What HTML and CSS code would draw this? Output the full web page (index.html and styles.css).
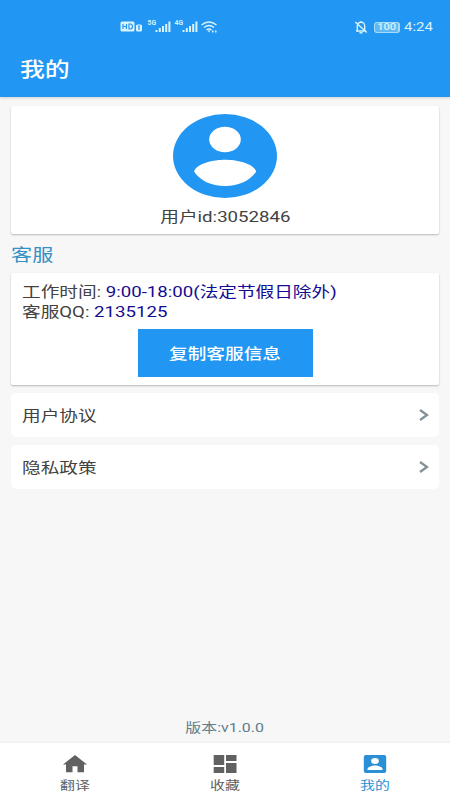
FILE: index.html
```html
<!DOCTYPE html>
<html lang="zh-CN">
<head>
<meta charset="utf-8">
<title>我的</title>
<link rel="stylesheet" href="styles.css">
</head>
<body>
<div class="app">
  <header class="header">
    <div class="status">
      <svg class="signals" width="98" height="16" viewBox="0 0 98 16">
        <rect class="light" x="0.500" y="3.5" width="14" height="10" rx="1.5"/>
        <path class="cut" d="M3 6v5M6.500 6v5M3 8.500H6.500M9 6v5h1.500q2-.2 2-2.500T10.500 6z"/>
        <rect class="light" x="16" y="6.500" width="6" height="7" rx="1.500"/>
        <path class="cut" d="M18 8.500l1-.5v4"/>
        <text x="27.500" y="7" textLength="8.500" lengthAdjust="spacingAndGlyphs">5G</text>
        <path class="light" d="M35.500 12h2v2h-2zM38.800 10h2v4h-2zM42 8h2v6h-2zM45.200 6h2v8h-2zM48.400 3.500h2V14h-2z"/>
        <text x="54.500" y="7" textLength="8.500" lengthAdjust="spacingAndGlyphs">4G</text>
        <path class="light" d="M62.500 12h2v2h-2zM65.800 10h2v4h-2zM69 8h2v6h-2zM72.200 6h2v8h-2zM75.400 3.500h2V14h-2z"/>
        <path class="wave" d="M81.500 7Q89 1 96.500 7M84 9.500q5-4 10 0M86.500 12q2.500-2 5 0"/>
        <path class="light" d="M87.500 12.500h3L89 14.500zM92 12.500h1.500v2H92zM95 12.500h1.500v2H95z"/>
      </svg>
      <div class="status-right">
        <svg width="14" height="14" viewBox="0 0 14 14">
          <path class="wave" d="M2 11h10M3.300 10.500V6Q3.500 2.500 7 2.300T10.700 6v4.500M5.500 12.700h3M1.300 2l11.500 10.500M7 1v1"/>
        </svg>
        <span class="battery"><span class="wide mid">100</span></span>
        <span class="clock"><span class="wide">4:24</span></span>
      </div>
    </div>
    <h1 class="title"><span class="wide">我的</span></h1>
  </header>

  <main class="content">
    <section class="card profile">
      <svg class="avatar" width="104" height="84" viewBox="0 0 104 84" preserveAspectRatio="none">
        <ellipse class="blue" cx="52" cy="42" rx="52" ry="42"/>
        <ellipse class="white" cx="52" cy="25.500" rx="15.800" ry="12.700"/>
        <path class="white" d="M21 57.500C24 49 41 45.700 52 45.700S80 49 83.200 57.500C77 66.500 66 72 52 72S27 66.500 21 57.500z"/>
      </svg>
      <div class="uid"><span class="wide mid">用户id:3052846</span></div>
    </section>

    <h2 class="section"><span class="wide">客服</span></h2>

    <section class="card service">
      <p class="line"><span class="wide">工作时间: <b>9:00-18:00(法定节假日除外)</b></span></p>
      <p class="line"><span class="wide">客服QQ: <b>2135125</b></span></p>
      <button class="copy"><span class="wide mid">复制客服信息</span></button>
    </section>

    <a class="row"><span class="wide">用户协议</span>
      <svg width="10" height="12" viewBox="0 0 10 12"><path class="chevron" d="M1 1l7 5-7 5"/></svg></a>
    <a class="row"><span class="wide">隐私政策</span>
      <svg width="10" height="12" viewBox="0 0 10 12"><path class="chevron" d="M1 1l7 5-7 5"/></svg></a>

    <div class="version"><span class="wide mid">版本:v1.0.0</span></div>
  </main>

  <nav class="tabs">
    <a class="tab">
      <svg width="24" height="18" viewBox="0 0 24 18"><path d="M9.500 17.200v-6h5v6H21V9.500h3L12 0 0 9.500h3v7.700z"/></svg>
      <span class="wide mid">翻译</span>
    </a>
    <a class="tab">
      <svg width="24" height="18" viewBox="0 0 24 18"><path d="M.7 0h10.500v10H.7zM.7 12h10.500v6H.7zM13 0h10.500v6H13zM13 8h10.500v10H13z"/></svg>
      <span class="wide mid">收藏</span>
    </a>
    <a class="tab active">
      <svg width="24" height="18" viewBox="0 0 24 18"><rect x=".8" width="22.400" height="18" rx="2"/><ellipse class="white" cx="12" cy="6" rx="3.900" ry="3.100"/><path class="white" d="M4.500 15v-1C4.500 11.700 9.500 10.400 12 10.400s7.500 1.300 7.500 3.600v1z"/></svg>
      <span class="wide mid">我的</span>
    </a>
  </nav>
</div>
</body>
</html>
```

FILE: styles.css
```css
* { box-sizing: border-box; }
body {
  margin: 0;
  font-family: Roboto, "Noto Sans CJK SC", sans-serif;
  font-size: 15px;
  color: #424242;
  background: #f7f7f7;
}
h1, h2, p { margin: 0; font-weight: 400; }
svg { display: block; flex: none; }
.app { width: 450px; height: 800px; display: flex; flex-direction: column; }

/* Lettering is drawn about a quarter wider than its natural width. */
.wide { display: inline-block; white-space: nowrap; transform: scaleX(1.243); transform-origin: 0 50%; }
.mid { transform-origin: 50% 50%; }

.header {
  height: 97px;
  flex: none;
  background: #2196f3;
  color: #fff;
  box-shadow: 0 1px 3px rgba(0, 0, 0, .16);
}
.status { height: 42px; padding: 18px 16px 0 120px; display: flex; justify-content: space-between; color: #d9f3fc; }
.status-right { display: flex; height: 18px; align-items: center; }
.status text { font-size: 7px; font-weight: 700; fill: #d9f3fc; }
.light { fill: #d9f3fc; }
.cut { fill: none; stroke: #2196f3; stroke-width: 1.2; }
.wave { fill: none; stroke: #d9f3fc; stroke-width: 1.4; }
.battery {
  width: 26px;
  height: 11px;
  margin-left: 6px;
  border: 1px solid #a5dcf8;
  border-right-width: 2px;
  border-radius: 3px;
  background: #62b7f5;
  font-size: 9px;
  font-weight: 500;
  line-height: 9px;
  text-align: center;
}
.clock { width: 30px; margin-left: 4px; font-size: 12px; line-height: 18px; }
.title { padding: 1px 0 0 20px; font-size: 20px; font-weight: 500; line-height: 55px; }

.content { flex: 1; padding: 9px 11px 0; display: flex; flex-direction: column; }
.card { background: #fff; border-radius: 2px; box-shadow: 0 1px 2px rgba(0, 0, 0, .26); flex: none; }
.profile { height: 128px; padding-top: 8px; }
.avatar { margin: 0 auto; }
.blue { fill: #2196f3; }
.white { fill: #fff; }
.uid { margin-top: 8px; line-height: 22px; text-align: center; }
.section { height: 39px; font-size: 17px; line-height: 43px; color: #3490c5; }
.service { height: 112px; padding: 9px 10.500px 0; }
.line { height: 19.500px; line-height: 20px; }
.line b { font-weight: 400; color: #140c92; }
.copy {
  display: block;
  width: 175px;
  height: 48px;
  margin: 8px auto 0;
  padding: 0 0 2px;
  border: 0;
  background: #2196f3;
  color: #fff;
  font: 500 15px Roboto, "Noto Sans CJK SC", sans-serif;
}
.row {
  height: 44px;
  flex: none;
  margin-top: 8px;
  padding: 0 10px 0 10.500px;
  display: flex;
  align-items: center;
  justify-content: space-between;
  background: #fff;
  border-radius: 5px;
}
.row .wide { padding-bottom: 2px; }
.chevron { fill: none; stroke: #839198; stroke-width: 2.3; }
.version { margin-top: auto; padding-bottom: 6px; font-size: 12.800px; line-height: 19px; text-align: center; color: #607d8b; }

.tabs { height: 57px; flex: none; display: flex; background: #fff; box-shadow: 0 -1px 2px rgba(0, 0, 0, .05); }
.tab {
  flex: 1;
  padding-top: 12px;
  display: flex;
  flex-direction: column;
  align-items: center;
  font-size: 12px;
  line-height: 18px;
  color: #616161;
  fill: currentColor;
}
.tab .wide { margin-top: 4px; }
.tab.active { color: #2b8fd6; }
```
